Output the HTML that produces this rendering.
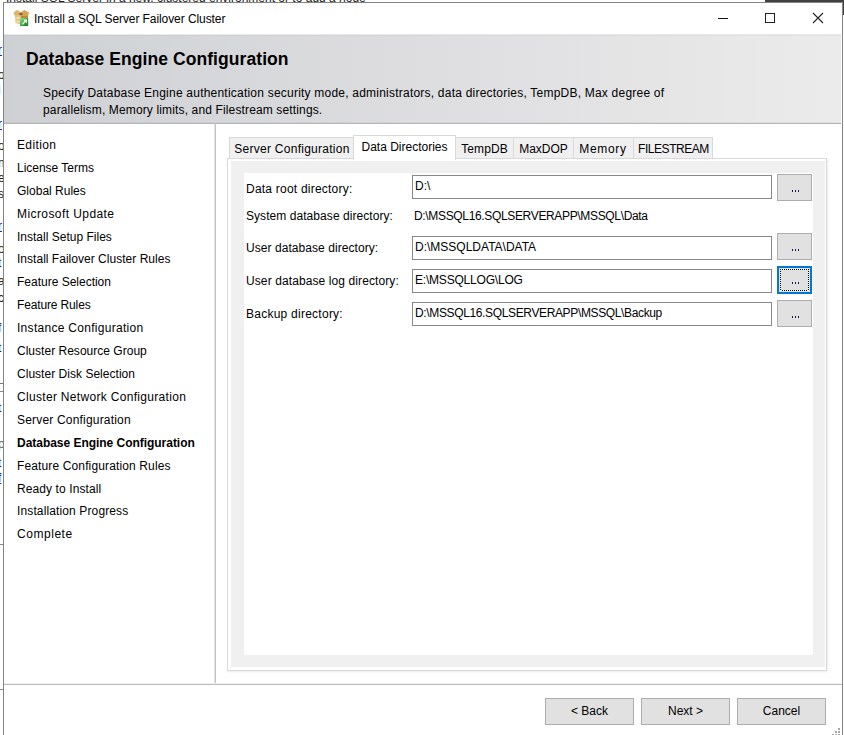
<!DOCTYPE html>
<html><head><meta charset="utf-8">
<style>
html,body{margin:0;padding:0;}
body{width:844px;height:735px;overflow:hidden;position:relative;background:#fff;font-family:"Liberation Sans",sans-serif;font-size:12px;color:#000;}
.a{position:absolute;}
.t{position:absolute;white-space:pre;line-height:15px;}
#win{position:absolute;left:3px;top:2px;width:838px;height:740px;border:1px solid #848484;background:#fff;}
#hdr{position:absolute;left:4px;top:34px;width:837px;height:89px;background:linear-gradient(to right,#cfd0d4,#ebebeb);border-bottom:1px solid #b6b6b9;box-shadow:inset 0 -1px 0 rgba(0,0,0,0.045),inset 0 1px 0 #e9e9ea,inset 0 2px 0 rgba(0,0,0,0.03);}
.nav{position:absolute;left:17px;white-space:pre;line-height:15px;}
.tab{position:absolute;top:137px;height:21px;background:#f0f0f0;border:1px solid #d9d9d9;border-bottom:none;box-sizing:border-box;}
.tab span{position:absolute;top:4px;left:0;right:0;text-align:center;white-space:pre;line-height:15px;}
.tb{position:absolute;left:412px;width:360px;height:24px;box-sizing:border-box;border:1px solid #888;background:#fff;}
.tb span{position:absolute;left:2px;top:3px;white-space:pre;line-height:15px;}
.bb{position:absolute;left:777px;width:35px;height:27px;box-sizing:border-box;border:1px solid #adadad;background:#e1e1e1;}
.dots{position:absolute;left:14px;top:15px;width:1px;height:2px;background:#1c1c50;box-shadow:3px 0 0 #1c1c50,6px 0 0 #1c1c50;}
.btn{position:absolute;top:698px;width:89px;height:27px;box-sizing:border-box;border:1px solid #adadad;background:#e1e1e1;}
.btn span{position:absolute;left:0;right:0;top:5px;text-align:center;white-space:pre;line-height:15px;}
</style></head><body>
<div class="a" style="left:0;top:0;width:3px;height:735px;overflow:hidden"><div class="t" style="left:-2px;top:43px;color:#2020e0;text-decoration:underline">r</div><div class="t" style="left:-2px;top:68px;color:#222">o</div><div class="t" style="left:-2px;top:83px;color:#602040">i</div><div class="t" style="left:-2px;top:117px;color:#2020e0;text-decoration:underline">r</div><div class="t" style="left:-2px;top:139px;color:#222">o</div><div class="t" style="left:-2px;top:156px;color:#222">n</div><div class="t" style="left:-2px;top:171px;color:#222">e</div><div class="t" style="left:-2px;top:187px;color:#222">s</div><div class="t" style="left:-2px;top:219px;color:#2020e0;text-decoration:underline">r</div><div class="t" style="left:-2px;top:242px;color:#222">o</div><div class="t" style="left:-2px;top:256px;color:#222">t</div><div class="t" style="left:-2px;top:274px;color:#222">a</div><div class="t" style="left:-2px;top:291px;color:#222">c</div><div class="t" style="left:-2px;top:321px;color:#333">f</div><div class="t" style="left:-2px;top:341px;color:#222">t</div><div class="t" style="left:-2px;top:401px;color:#222">t</div><div class="t" style="left:-2px;top:437px;color:#555">p</div><div class="t" style="left:-2px;top:456px;color:#222">t</div><div class="t" style="left:-2px;top:471px;color:#2020e0;text-decoration:underline">f</div><div class="a" style="left:0;top:383px;width:3px;height:1px;background:#777"></div><div class="a" style="left:0;top:391px;width:3px;height:1px;background:#888"></div><div class="a" style="left:0;top:544px;width:3px;height:1px;background:#888"></div><div class="a" style="left:0;top:689px;width:3px;height:1px;background:#888"></div></div>
<div class="a" style="left:765px;top:0;width:79px;height:2px;background:#404040"></div><div class="a" style="left:843px;top:0;width:1px;height:15px;background:#404040"></div>
<div class="a" style="left:4px;top:0;width:366px;height:2px;overflow:hidden"><div class="t" style="left:2px;top:-9px;color:#222">Install SQL Server in a new, clustered environment or to add a node</div></div>
<div id="win"></div>
<!-- title bar -->
<svg class="a" style="left:10px;top:6px" width="24" height="24" viewBox="10 6 24 24">
  <defs><linearGradient id="gr" x1="0" y1="0" x2="1" y2="1"><stop offset="0" stop-color="#9be08a"/><stop offset="0.5" stop-color="#3fae3a"/><stop offset="1" stop-color="#1f7a1f"/></linearGradient></defs>
  <path d="M15 15 L21 15.5 L21 24.5 L15.5 23 Z" fill="#e2c383"/>
  <path d="M21 15.5 L28 15 L28 24 L21 24.5 Z" fill="#b98a3a"/>
  <rect x="16.5" y="17" width="3" height="2" fill="#f3e2b8"/>
  <rect x="16.5" y="20.5" width="3" height="2" fill="#f3e2b8"/>
  <path d="M13.5 12.5 L17 10 L21.5 12.5 L20 15.8 L14.2 15.2 Z" fill="#dcb56a"/>
  <path d="M20.5 12.5 L24.5 10 L29 12.5 L28.3 15.5 L22 16 Z" fill="#d2a556"/>
  <path d="M18.5 14 L21 12.8 L23 14 L21 15.8 Z" fill="#8a5c1c"/>
  <rect x="20" y="18" width="8.2" height="8" fill="url(#gr)"/>
  <path d="M22.3 24.2 L26 20.5" stroke="#fff" stroke-width="1.4"/>
  <path d="M23.2 19.5 L27 19.5 L27 23.3 Z" fill="#fff"/>
</svg>
<div class="t" style="left:34px;top:12px;letter-spacing:-0.08px;color:#000">Install a SQL Server Failover Cluster</div>
<div class="a" style="left:718px;top:18px;width:10px;height:1px;background:#111"></div>
<div class="a" style="left:765px;top:13px;width:10px;height:10px;box-sizing:border-box;border:1px solid #222"></div>
<svg class="a" style="left:812px;top:12px" width="12" height="12" viewBox="0 0 12 12"><path d="M1 1 L11 11 M11 1 L1 11" stroke="#222" stroke-width="1.1"/></svg>

<!-- header -->
<div id="hdr"></div>
<div class="t" style="left:26px;top:49px;font-size:17.5px;font-weight:bold;line-height:20px;letter-spacing:0.07px">Database Engine Configuration</div>
<div class="t" style="left:43px;top:86px;letter-spacing:0.219px">Specify Database Engine authentication security mode, administrators, data directories, TempDB, Max degree of</div>
<div class="t" style="left:43px;top:103px;letter-spacing:0.139px">parallelism, Memory limits, and Filestream settings.</div>

<!-- separators -->
<div class="a" style="left:214px;top:124px;width:1px;height:560px;background:#e4e4e7"></div><div class="a" style="left:215px;top:123px;width:1px;height:561px;background:#c2c3c8"></div>
<div class="a" style="left:4px;top:683px;width:838px;height:1px;background:#f0f0f1"></div><div class="a" style="left:4px;top:684px;width:838px;height:1px;background:#babbbf"></div>

<!-- nav -->
<div class="nav" style="top:138px;letter-spacing:0.367px">Edition</div>
<div class="nav" style="top:161px;letter-spacing:-0.017px">License Terms</div>
<div class="nav" style="top:184px;letter-spacing:0.009px">Global Rules</div>
<div class="nav" style="top:207px;letter-spacing:0.42px">Microsoft Update</div>
<div class="nav" style="top:230px;letter-spacing:0.006px">Install Setup Files</div>
<div class="nav" style="top:252px;letter-spacing:0.024px">Install Failover Cluster Rules</div>
<div class="nav" style="top:275px;letter-spacing:-0.006px">Feature Selection</div>
<div class="nav" style="top:298px;letter-spacing:-0.142px">Feature Rules</div>
<div class="nav" style="top:321px;letter-spacing:0.29px">Instance Configuration</div>
<div class="nav" style="top:344px;letter-spacing:0.019px">Cluster Resource Group</div>
<div class="nav" style="top:367px;letter-spacing:0.029px">Cluster Disk Selection</div>
<div class="nav" style="top:390px;letter-spacing:0.314px">Cluster Network Configuration</div>
<div class="nav" style="top:413px;letter-spacing:0.189px">Server Configuration</div>
<div class="nav" style="top:436px;letter-spacing:-0.032px;font-weight:bold">Database Engine Configuration</div>
<div class="nav" style="top:459px;letter-spacing:0.131px">Feature Configuration Rules</div>
<div class="nav" style="top:482px;letter-spacing:0.1px">Ready to Install</div>
<div class="nav" style="top:504px;letter-spacing:0.125px">Installation Progress</div>
<div class="nav" style="top:527px;letter-spacing:0.543px">Complete</div>

<!-- tab panel -->
<div class="a" style="left:227px;top:158px;width:600px;height:513px;box-sizing:border-box;border:1px solid #d9d9d9;background:#fff;box-shadow:1px 1px 2px rgba(0,0,0,0.07)"></div>
<div class="a" style="left:231px;top:161px;width:594px;height:506px;background:#f0f0f0"></div>
<div class="a" style="left:244px;top:173px;width:569px;height:482px;background:#fff"></div>

<div class="tab" style="left:229px;width:126px"><span style="letter-spacing:0.26px">Server Configuration</span></div>
<div class="tab" style="left:353px;top:135px;width:103px;height:25px;background:#fff;border-color:#d9d9d9"><span style="top:4px">Data Directories</span></div>
<div class="tab" style="left:455px;width:59px"><span style="letter-spacing:0.1px">TempDB</span></div>
<div class="tab" style="left:513px;width:61px"><span>MaxDOP</span></div>
<div class="tab" style="left:573px;width:61px"><span style="letter-spacing:0.7px;left:-1px">Memory</span></div>
<div class="tab" style="left:633px;width:80px"><span style="letter-spacing:-0.45px;left:1px">FILESTREAM</span></div>

<!-- rows -->
<div class="t" style="left:246px;top:182px;letter-spacing:0.22px">Data root directory:</div>
<div class="tb" style="top:175px"><span>D:\</span></div>
<div class="bb" style="top:174px"><div class="dots"></div></div>

<div class="t" style="left:246px;top:209px;letter-spacing:0.06px">System database directory:</div>
<div class="t" style="left:414px;top:209px;letter-spacing:-0.34px">D:\MSSQL16.SQLSERVERAPP\MSSQL\Data</div>

<div class="t" style="left:246px;top:241px;letter-spacing:0.06px">User database directory:</div>
<div class="tb" style="top:236px"><span>D:\MSSQLDATA\DATA</span></div>
<div class="bb" style="top:233px"><div class="dots"></div></div>

<div class="t" style="left:246px;top:274px;letter-spacing:0.1px">User database log directory:</div>
<div class="tb" style="top:269px"><span style="letter-spacing:-0.2px">E:\MSSQLLOG\LOG</span></div>
<div class="bb" style="top:266px;height:28px;border:2px solid #0078d7">
<div class="a" style="left:1px;top:1px;width:29px;height:1px;background:repeating-linear-gradient(to right,#000 0 1px,#fff 1px 2px)"></div>
<div class="a" style="left:1px;top:22px;width:29px;height:1px;background:repeating-linear-gradient(to right,#000 0 1px,#fff 1px 2px)"></div>
<div class="a" style="left:1px;top:1px;width:1px;height:22px;background:repeating-linear-gradient(to bottom,#000 0 1px,#fff 1px 2px)"></div>
<div class="a" style="left:29px;top:1px;width:1px;height:22px;background:repeating-linear-gradient(to bottom,#000 0 1px,#fff 1px 2px)"></div>
<div class="dots" style="left:13px;top:14px"></div></div>

<div class="t" style="left:246px;top:307px;letter-spacing:0.25px">Backup directory:</div>
<div class="tb" style="top:302px"><span style="letter-spacing:-0.36px">D:\MSSQL16.SQLSERVERAPP\MSSQL\Backup</span></div>
<div class="bb" style="top:300px"><div class="dots"></div></div>

<!-- bottom buttons -->
<div class="a" style="left:838px;top:728px;width:2px;height:2px;background:#a8a8a8;box-shadow:-3px 3px 0 #a8a8a8,0 3px 0 #a8a8a8,-6px 6px 0 #a8a8a8,-3px 6px 0 #a8a8a8,0 6px 0 #a8a8a8"></div>
<div class="btn" style="left:545px"><span>&lt; Back</span></div>
<div class="btn" style="left:641px"><span>Next &gt;</span></div>
<div class="btn" style="left:737px"><span>Cancel</span></div>

</body></html>
